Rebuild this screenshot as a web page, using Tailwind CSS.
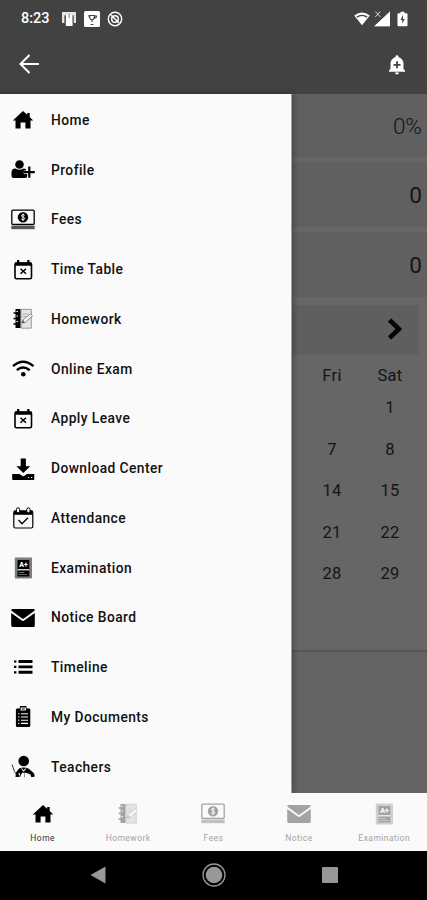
<!DOCTYPE html>
<html lang="en">
<head>
  <meta charset="UTF-8" />
  <meta name="viewport" content="width=device-width, initial-scale=1.0" />
  <title>Student App</title>
  <script src="https://cdn.jsdelivr.net/npm/@tailwindcss/browser@4"></script>
</head>
<body class="w-[427px] h-[900px] overflow-hidden bg-black font-['Roboto',sans-serif] text-black flex flex-col">

  <!-- Icons used more than once -->
  <svg class="hidden">
    <symbol id="home" viewBox="0 0 24 24"><path d="M9.600 20.500v-6h4.800v6h5.100v-8h2.700L18.700 9V5h-2.500v1.800L12 3 1.800 12.500h2.700v8z"/></symbol>
    <symbol id="fees" viewBox="0 0 24 24">
      <rect x=".8" y="2.200" width="22.400" height="14.300" rx="1" fill="none" stroke="currentColor" stroke-width="1.300"/>
      <circle cx="12" cy="9.300" r="5.200"/>
      <path d="M13.700 7.300c-.7-1-3.200-.9-3.200.5 0 1.600 3.200 1 3.200 2.700 0 1.400-2.700 1.500-3.400.4M12 5.500v7.600" fill="none" stroke="#fafafa" stroke-width="1"/>
      <path d="M.3 17.800h23.400v3.400H.3z" opacity=".65"/>
    </symbol>
    <symbol id="calx" viewBox="0 0 24 24">
      <rect x="4" y="5" width="16.500" height="15.700" rx="1.500" fill="none" stroke="currentColor" stroke-width="1.600"/>
      <path d="M4 4.500h16.500v3.200H4zM6 2h2.300v4H6zM16.200 2h2.300v4h-2.300z"/>
      <path d="M9.500 10.800l5.500 5M15 10.800l-5.500 5" stroke="currentColor" stroke-width="1.500"/>
    </symbol>
    <symbol id="homework" viewBox="0 0 24 24">
      <path d="M4.500 2h5v19h-5z"/>
      <path d="M2.500 6h4M2.500 11.500h4M2.500 17h4" stroke="currentColor" stroke-width="1.400"/>
      <path d="M5.500 4.500h1.500M5.500 9h1.500M5.500 14.500h1.500" stroke="#fafafa" stroke-width="1"/>
      <path d="M10 2.300h10.300v18.900H10z" fill="#e4e4e4" stroke="currentColor" stroke-width=".6" stroke-opacity=".6"/>
      <path d="M11.500 7h6M11.500 9.500h5" stroke="currentColor" stroke-width=".5" stroke-opacity=".4"/>
      <path d="M11 16l1-3 7.500-6.200 2 2.200-7.500 6.500z" fill="#fafafa" stroke="currentColor" stroke-width=".6" stroke-opacity=".7"/>
      <path d="M11 16l1-3 2 2.500z" opacity=".6"/>
    </symbol>
    <symbol id="exam" viewBox="0 0 24 24">
      <rect x="3.800" y="1.500" width="17.200" height="21" rx=".8" opacity=".5"/>
      <rect x="6.500" y="4" width="11.800" height="16.500"/>
      <text x="12.400" y="11" font-size="7" font-weight="900" letter-spacing="0" text-anchor="middle" fill="#fafafa">A+</text>
      <path d="M6.500 13.800h11.800" stroke="#fafafa" stroke-width="1.200"/>
      <path d="M7.500 16.500h6M7.500 18.600h9" stroke="#fafafa" stroke-width=".6" opacity=".7"/>
    </symbol>
    <symbol id="mail" viewBox="0 0 24 24"><path d="M1.800 3h20.400c1 0 1.600.5 1.600 1.500L12.500 12.800h-1L.2 4.500C.2 3.500.8 3 1.800 3zM.2 7l11 7.800q.8.500 1.600 0l11-7.800v12.500q0 1.500-1.500 1.500H1.700Q.2 20.800.2 19.300z"/></symbol>
  </svg>

  <!-- Header -->
  <header class="h-[94px] shrink-0 bg-[#424242] text-white">
    <div class="h-9 flex items-center pl-[21px] pr-[19px] pt-px">
      <span class="w-[40px] text-[14.5px] font-medium">8:23</span>
      <svg class="w-4 h-4" viewBox="0 0 16 16" fill="#fff"><path d="M1 1h14v11h-2.500V4.500H3.500V12H1z" opacity=".85"/><path d="M4.800 3.800h6.800V15H4.800z"/><path d="M4.200 4v8M12.200 4v8M8.200 3v4" stroke="#555" stroke-width=".8"/></svg>
      <svg class="w-4 h-4 ml-[7px]" viewBox="0 0 16 16"><rect width="16" height="16" rx="1.500" fill="#fff"/><path d="M5.500 4.500h5q0 4-2.500 4.300Q5.500 8.500 5.500 4.500zM8 9v2M6.500 13.500h3M10.500 5h2q0 2-2.500 2.300M5 5H4" fill="none" stroke="#444" stroke-width="1.200"/></svg>
      <svg class="w-4 h-4 ml-[7px]" viewBox="0 0 16 16" fill="none" stroke="#fff"><circle cx="8" cy="8" r="6.700" stroke-width="1.400"/><circle cx="8" cy="8" r="3.300" stroke-width="1.500"/><path d="M4 4l8 8" stroke-width="1.500"/></svg>
      <svg class="w-4 h-4 ml-auto" viewBox="0 0 16 16" fill="#fff"><path d="M8 14.200L.2 4.500q7.800-6.200 15.600 0z"/><path d="M2.800 6.100q5.200-3.600 10.400 0" fill="none" stroke="#424242" stroke-width="1.300"/></svg>
      <svg class="w-4 h-4 ml-1" viewBox="0 0 16 16" fill="#fff"><path d="M16 .8V15H.8zM1.300.5l5 5.500M6.300.5l-5 5.500" stroke="#fff" stroke-width=".8"/></svg>
      <svg class="w-[11px] h-4 ml-[7px]" viewBox="0 0 11 16"><path d="M3.500.8h4v1.500h2q1 0 1 1v11q0 1-1 1h-8q-1 0-1-1v-11q0-1 1-1h2z" fill="#fff"/><path d="M6 3.800L3.500 9h1.800v3.500L7.800 8H6z" fill="#424242"/></svg>
    </div>
    <div class="h-14 flex items-center justify-between pl-[19px] pr-[18px]">
      <svg class="w-5 h-5" viewBox="0 0 20 20" fill="none" stroke="#fff" stroke-width="2"><path d="M20 10H2M10.500 1L1.500 10l9 9"/></svg>
      <svg class="w-6 h-6 mt-0.5" viewBox="0 0 24 24"><path d="M12 2.200c.9 0 1.500.6 1.500 1.400v.7C16.800 5 18.500 8 18.500 11v5l1.500 1.500v1.300H4v-1.300L5.500 16v-5c0-3 1.700-6 5-6.700v-.7c0-.8.600-1.400 1.500-1.400zM10 19.500h4c0 1.300-.8 2-2 2s-2-.7-2-2z" fill="#fff"/><path d="M12 8.300v7M8.500 11.800h7" stroke="#424242" stroke-width="1.800"/></svg>
    </div>
  </header>

  <main class="h-[699px] shrink-0 flex bg-[#666]">
    <!-- Drawer -->
    <aside class="relative w-[292px] shrink-0 bg-[#fafafa] border-r border-[#a0a0a0] shadow-[1px_0_6px_rgba(0,0,0,0.35)]">
      <ul class="pt-[1.5px] text-[13.8px] font-medium tracking-[0.43px] text-[#111] [&>li]:flex [&>li]:items-center [&>li]:gap-4 [&>li]:h-[49.74px] [&>li]:pl-[11px] [&_svg]:w-6 [&_svg]:h-6 [&_svg]:fill-current [&_svg]:text-black">
        <li><svg><use href="#home"/></svg>Home</li>
        <li><svg viewBox="0 0 24 24"><circle cx="8.500" cy="6.500" r="4.300"/><path d="M.5 18v-3.500q0-4 4-4 4 2.500 8 0 2 0 2.500 1v3h1.200V18q0 2-2 2H2.500q-2 0-2-2z"/><path d="M18.300 8.700v11M12.800 14.200h11" stroke="#fafafa" stroke-width="3.400"/><path d="M18.300 8.500v11.300M12.800 14.200h11" stroke="currentColor" stroke-width="2.200"/></svg>Profile</li>
        <li><svg><use href="#fees"/></svg>Fees</li>
        <li><svg><use href="#calx"/></svg>Time Table</li>
        <li><svg><use href="#homework"/></svg>Homework</li>
        <li><svg viewBox="0 0 24 24"><path d="M2 9.200q10-8.700 20.500 0M5.800 13.200q6.300-5.300 12.900 0" fill="none" stroke="currentColor" stroke-width="2.400"/><circle cx="12.300" cy="17.200" r="2.300"/></svg>Online Exam</li>
        <li><svg><use href="#calx"/></svg>Apply Leave</li>
        <li><svg viewBox="0 0 24 24"><path d="M9.700 1.500h5.200v7.800h4.300L12.300 16 5.400 9.300h4.300z"/><path d="M1.200 17h7.300l3.800 2.500L16 17h7.300v5.300q0 .7-.7.700H1.900q-.7 0-.7-.7z"/><path d="M17 20.500h1.200M20 20.500h1.200" stroke="#fafafa" stroke-width="1.200"/></svg>Download Center</li>
        <li><svg viewBox="0 0 24 24"><rect x="2.800" y="5" width="19" height="17" rx="1.500" fill="none" stroke="currentColor" stroke-width="1.200"/><path d="M3 4.500h18.600v4.300H3z"/><rect x="5.500" y="1.800" width="3.200" height="5" rx="1.600" fill="#fafafa" stroke="currentColor"/><rect x="15.800" y="1.800" width="3.200" height="5" rx="1.600" fill="#fafafa" stroke="currentColor"/><path d="M7.500 14l3.500 3.700 6-6" fill="none" stroke="currentColor" stroke-width="1.300"/></svg>Attendance</li>
        <li><svg><use href="#exam"/></svg>Examination</li>
        <li><svg><use href="#mail"/></svg>Notice Board</li>
        <li><svg viewBox="0 0 24 24"><path d="M7.500 6.500h14M7.500 11.900h14M7.500 17.300h14" stroke="currentColor" stroke-width="2.900"/><path d="M3 6.500h2.400M3 11.900h2.400M3 17.300h2.400" stroke="currentColor" stroke-width="2.200"/></svg>Timeline</li>
        <li><svg viewBox="0 0 24 24"><path d="M6.500 3.500h2.300V2q0-1 1-1h4.800q1 0 1 1v1.500H18q1.300 0 1.300 1.300v16q0 1.300-1.300 1.300H6.200q-1.300 0-1.300-1.300v-16q0-1.300 1.600-1.300z"/><path d="M10.200 3h4.200v2h-4.200zM10 8.800h7M10 12h7M10 15.200h7M10 18.400h7" fill="none" stroke="#fafafa" stroke-width="1.100"/><path d="M7 8.800h1.500M7 12h1.500M7 15.200h1.500M7 18.400h1.500" stroke="#fafafa" stroke-width=".9"/></svg>My Documents</li>
        <li><svg viewBox="0 0 24 24"><circle cx="12.700" cy="6" r="5.300"/><path d="M5 17.500l3-4q4.700-1.800 9.400 0l5 4.200q1.800 2 .8 4.300h-3l-.7-2.500-4.500-1.800h-4l-1.800 4-4.700.3z"/><path d="M1 9.500l2.500 7 2 3" fill="none" stroke="currentColor" stroke-width=".8"/><path d="M13.500 18v4.500" stroke="currentColor" stroke-width=".8" opacity=".5"/><path d="M10.500 13.500l2.200 2.500 2.200-2.500M7.800 18l1 2.500" fill="none" stroke="#fafafa" stroke-width="1.100"/></svg>Teachers</li>
      </ul>
    </aside>

    <!-- Dimmed dashboard -->
    <section class="flex-1 text-[#141414]">
      <div class="text-[22.500px] text-right [&>div]:bg-[#606060] [&>div]:pr-[5px] [&>div]:flex [&>div]:items-center [&>div]:justify-end [&>div]:pt-[3px]">
        <div class="h-[63px] font-light">0%</div>
        <div class="h-[65px] mt-[5px]">0</div>
        <div class="h-[65px] mt-[5px]">0</div>
      </div>
      <div class="h-[50px] mt-[8px] mr-[8px] bg-[#5f5f5f] flex items-center justify-end pr-4">
        <svg class="w-4 h-[22px] -mt-0.5" viewBox="0 0 16 22" fill="none" stroke="#050505" stroke-width="4.500"><path d="M2.500 2L12 11l-9.500 9"/></svg>
      </div>
      <div class="h-[297px] pt-[11px] border-b-2 border-[#555] grid grid-cols-[58px_58px] content-start pl-[11px] text-center text-[16.500px] leading-[20px] tracking-[0.3px]">
        <span>Fri</span><span>Sat</span>
        <span class="col-start-2 mt-3">1</span>
        <span class="mt-[21.500px]">7</span><span class="mt-[21.500px]">8</span>
        <span class="mt-[21.500px]">14</span><span class="mt-[21.500px]">15</span>
        <span class="mt-[21.500px]">21</span><span class="mt-[21.500px]">22</span>
        <span class="mt-[21.500px]">28</span><span class="mt-[21.500px]">29</span>
      </div>
      <div class="h-[141px] bg-[#646464]"></div>
    </section>
  </main>

  <!-- Bottom tabs -->
  <nav class="relative h-[58px] shrink-0 bg-[#fafafa] grid grid-cols-5 text-[8.500px] tracking-[0.45px] text-[#a3a3a3] [&>div]:flex [&>div]:flex-col [&>div]:items-center [&>div]:pt-[9px] [&_svg]:w-6 [&_svg]:h-6 [&_svg]:fill-current [&_span]:mt-[6px] [&_span]:leading-3">
    <div class="text-black"><svg><use href="#home"/></svg><span class="text-[#333]">Home</span></div>
    <div><svg><use href="#homework"/></svg><span>Homework</span></div>
    <div><svg><use href="#fees"/></svg><span>Fees</span></div>
    <div><svg><use href="#mail"/></svg><span>Notice</span></div>
    <div><svg><use href="#exam"/></svg><span>Examination</span></div>
  </nav>

  <!-- System buttons -->
  <footer class="h-[48px] flex justify-center items-center gap-24 bg-black">
    <svg class="w-4 h-[18px]" viewBox="0 0 16 18" fill="#989898"><path d="M15.500 .5v17L.5 9z"/></svg>
    <svg class="w-6 h-6" viewBox="0 0 24 24"><circle cx="12" cy="12" r="11" fill="none" stroke="#989898" stroke-width="1.300"/><circle cx="12" cy="12" r="8.300" fill="#989898"/></svg>
    <svg class="w-4 h-4" viewBox="0 0 16 16"><rect width="16" height="16" rx="1" fill="#989898"/></svg>
  </footer>

</body>
</html>
